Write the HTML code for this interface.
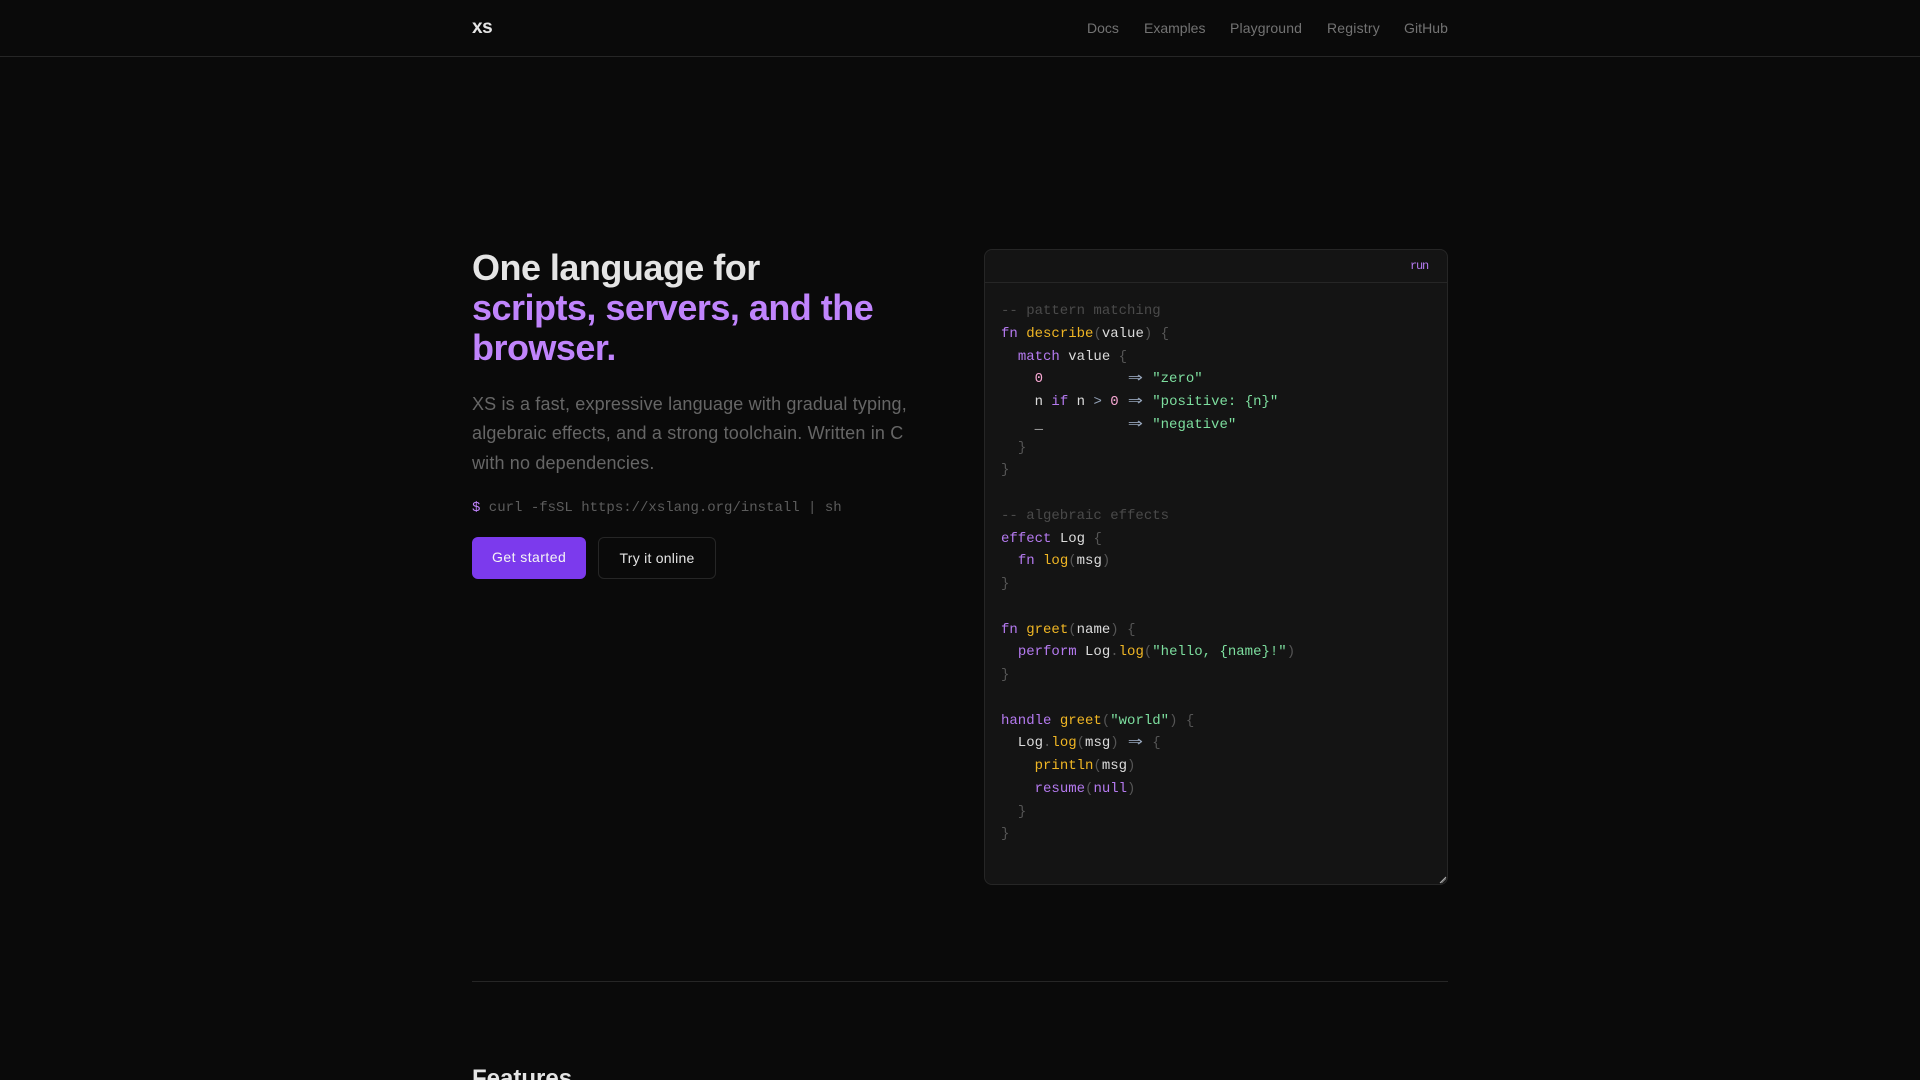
<!DOCTYPE html>
<html lang="en">
<head>
<meta charset="utf-8">
<title>XS</title>
<style>
html,body{margin:0;padding:0;width:1920px;height:1080px;overflow:hidden;background:#0a0a0a;}
body{position:relative;font-family:"Liberation Sans",sans-serif;}
.a{position:absolute;white-space:pre;margin:0;}
.nav{top:18px;font-size:14px;line-height:20px;color:#737373;}
.t{left:472px;font-size:36px;line-height:40px;font-weight:700;letter-spacing:-.52px;}
.p{left:472px;font-size:18px;line-height:29.25px;color:#666;letter-spacing:.16px;}
.m{font-family:"Liberation Mono",monospace;}
#panel{left:984px;top:249px;width:462px;height:634px;background:#141414;border:1px solid #262626;border-radius:8px;}
#code{left:1001px;top:300px;font-family:"Liberation Mono",monospace;font-size:14px;line-height:22.75px;color:#dcdcdc;}
.c{color:#4a4a4a}.k{color:#b57af0}.f{color:#f0b624}.g{color:#555}.s{color:#7ddf9f}.n{color:#f9a8d4}.o{color:#94a3b8}
.ar{display:inline-block;width:16.8px;text-align:center;color:#94a3b8;font-family:"DejaVu Sans",sans-serif;font-size:14px;line-height:14px;transform:scaleX(1.3);}
</style>
</head>
<body>
<div class="a" style="left:0;top:56px;width:1920px;height:1px;background:#262626"></div>
<div class="a" style="left:472px;top:16px;font-size:19px;line-height:24px;font-weight:700;color:#e5e5e5;letter-spacing:-.5px">xs</div>
<a class="a nav" style="left:1087px">Docs</a>
<a class="a nav" style="left:1144px">Examples</a>
<a class="a nav" style="left:1230px;letter-spacing:.12px">Playground</a>
<a class="a nav" style="left:1327px;letter-spacing:.2px">Registry</a>
<a class="a nav" style="left:1404px;letter-spacing:.07px">GitHub</a>

<div class="a t" style="top:248px;color:#e5e5e5">One language for</div>
<div class="a t" style="top:288px;color:#c084fc">scripts, servers, and the</div>
<div class="a t" style="top:328px;color:#c084fc">browser.</div>

<div class="a p" style="top:390px">XS is a fast, expressive language with gradual typing,</div>
<div class="a p" style="top:419.25px;letter-spacing:.18px">algebraic effects, and a strong toolchain. Written in C</div>
<div class="a p" style="top:448.5px">with no dependencies.</div>

<div class="a m" style="left:472px;top:498px;font-size:14px;line-height:20px;color:#5c5c5c"><span style="color:#c084fc">$</span> curl -fsSL https://xslang.org/install | sh</div>

<div class="a" style="left:472px;top:537px;width:114px;height:42px;background:#7c3aed;border-radius:6px"></div>
<div class="a" style="left:492px;top:547px;font-size:14px;line-height:20px;color:#f5f5f5;letter-spacing:.45px">Get started</div>
<div class="a" style="left:598px;top:537px;width:116px;height:40px;border:1px solid #262626;border-radius:6px"></div>
<div class="a" style="left:619.5px;top:548px;font-size:14px;line-height:20px;color:#e5e5e5;letter-spacing:.25px">Try it online</div>

<div class="a" id="panel"></div>
<div class="a" style="left:985px;top:282px;width:462px;height:1px;background:#262626"></div>
<div class="a m" style="left:1410px;top:258px;font-size:12px;line-height:16px;color:#b57af0;letter-spacing:-1.2px">run</div>
<pre class="a" id="code"><span class="c">-- pattern matching</span>
<span class="k">fn</span> <span class="f">describe</span><span class="g">(</span>value<span class="g">)</span> <span class="g">{</span>
  <span class="k">match</span> value <span class="g">{</span>
    <span class="n">0</span>          <span class="ar">⇒</span> <span class="s">"zero"</span>
    n <span class="k">if</span> n <span class="o">&gt;</span> <span class="n">0</span> <span class="ar">⇒</span> <span class="s">"positive: {n}"</span>
    _          <span class="ar">⇒</span> <span class="s">"negative"</span>
  <span class="g">}</span>
<span class="g">}</span>

<span class="c">-- algebraic effects</span>
<span class="k">effect</span> Log <span class="g">{</span>
  <span class="k">fn</span> <span class="f">log</span><span class="g">(</span>msg<span class="g">)</span>
<span class="g">}</span>

<span class="k">fn</span> <span class="f">greet</span><span class="g">(</span>name<span class="g">)</span> <span class="g">{</span>
  <span class="k">perform</span> Log<span class="g">.</span><span class="f">log</span><span class="g">(</span><span class="s">"hello, {name}!"</span><span class="g">)</span>
<span class="g">}</span>

<span class="k">handle</span> <span class="f">greet</span><span class="g">(</span><span class="s">"world"</span><span class="g">)</span> <span class="g">{</span>
  Log<span class="g">.</span><span class="f">log</span><span class="g">(</span>msg<span class="g">)</span> <span class="ar">⇒</span> <span class="g">{</span>
    <span class="f">println</span><span class="g">(</span>msg<span class="g">)</span>
    <span class="k">resume</span><span class="g">(</span><span class="k">null</span><span class="g">)</span>
  <span class="g">}</span>
<span class="g">}</span></pre>
<svg class="a" style="left:1438px;top:874px" width="10" height="10" viewBox="0 0 10 10"><path d="M2 9L8 3" stroke="#b0b0b0" stroke-width="1" fill="none"/><path d="M3.5 9L8 4.5" stroke="#777" stroke-width="1" fill="none"/></svg>

<div class="a" style="left:472px;top:981px;width:976px;height:1px;background:#262626"></div>
<div class="a" style="left:472px;top:1064px;font-size:24px;line-height:30px;font-weight:700;color:#e5e5e5;letter-spacing:0">Features</div>
</body>
</html>
